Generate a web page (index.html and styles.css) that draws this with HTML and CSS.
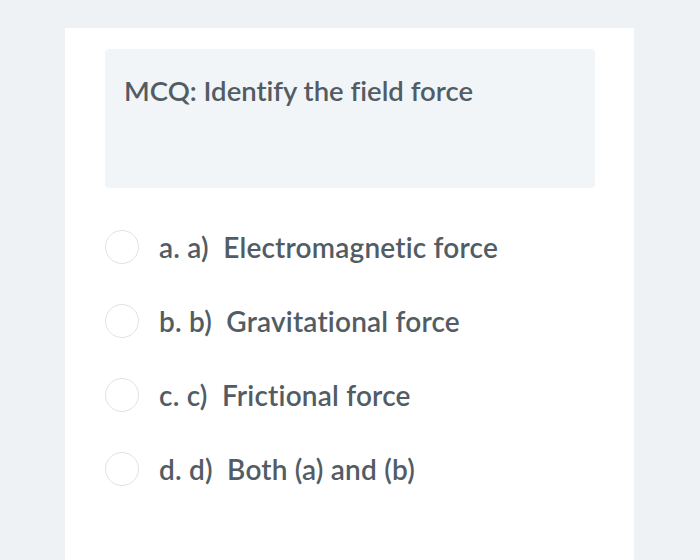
FILE: index.html
```html
<!DOCTYPE html>
<html>
<head>
<meta charset="utf-8">
<link rel="stylesheet" href="styles.css">
</head>
<body>
<div class="page">
  <div class="card">
    <div class="question">MCQ: Identify the field force</div>
    <div class="options">
      <div class="option"><span class="radio"></span><span class="label">a. a)&nbsp; Electromagnetic force</span></div>
      <div class="option"><span class="radio"></span><span class="label">b. b)&nbsp; Gravitational force</span></div>
      <div class="option"><span class="radio"></span><span class="label">c. c)&nbsp; Frictional force</span></div>
      <div class="option"><span class="radio"></span><span class="label">d. d)&nbsp; Both (a) and (b)</span></div>
    </div>
  </div>
</div>
</body>
</html>
```
FILE: styles.css
```css
html, body {
  margin: 0;
  padding: 0;
  background: #eff2f4;
  height: 100%;
}
.page {
  padding: 28px 66px 0 65px;
  height: 100%;
  box-sizing: border-box;
}
.card {
  background: #ffffff;
  height: 100%;
  box-sizing: border-box;
  padding: 21px 39px 0 40px;
  font-family: Lato, "Open Sans", sans-serif;
  color: #525c65;
  font-variant-ligatures: none;
}
.question {
  background: #f2f5f7;
  border-radius: 4px;
  height: 139px;
  box-sizing: border-box;
  padding: 23px 19px;
  font-size: 27.5px;
  font-weight: 600;
  line-height: 38px;
}
.options {
  display: flex;
  flex-direction: column;
  gap: 40px;
  padding-top: 42px;
}
.option {
  display: flex;
  align-items: center;
  height: 34px;
}
.radio {
  width: 32px;
  height: 32px;
  border: 1.5px solid #dfe3e6;
  border-radius: 50%;
  flex: none;
}
.label {
  margin-left: 20px;
  font-size: 28px;
  font-weight: 600;
  letter-spacing: 0.2px;
}
```
